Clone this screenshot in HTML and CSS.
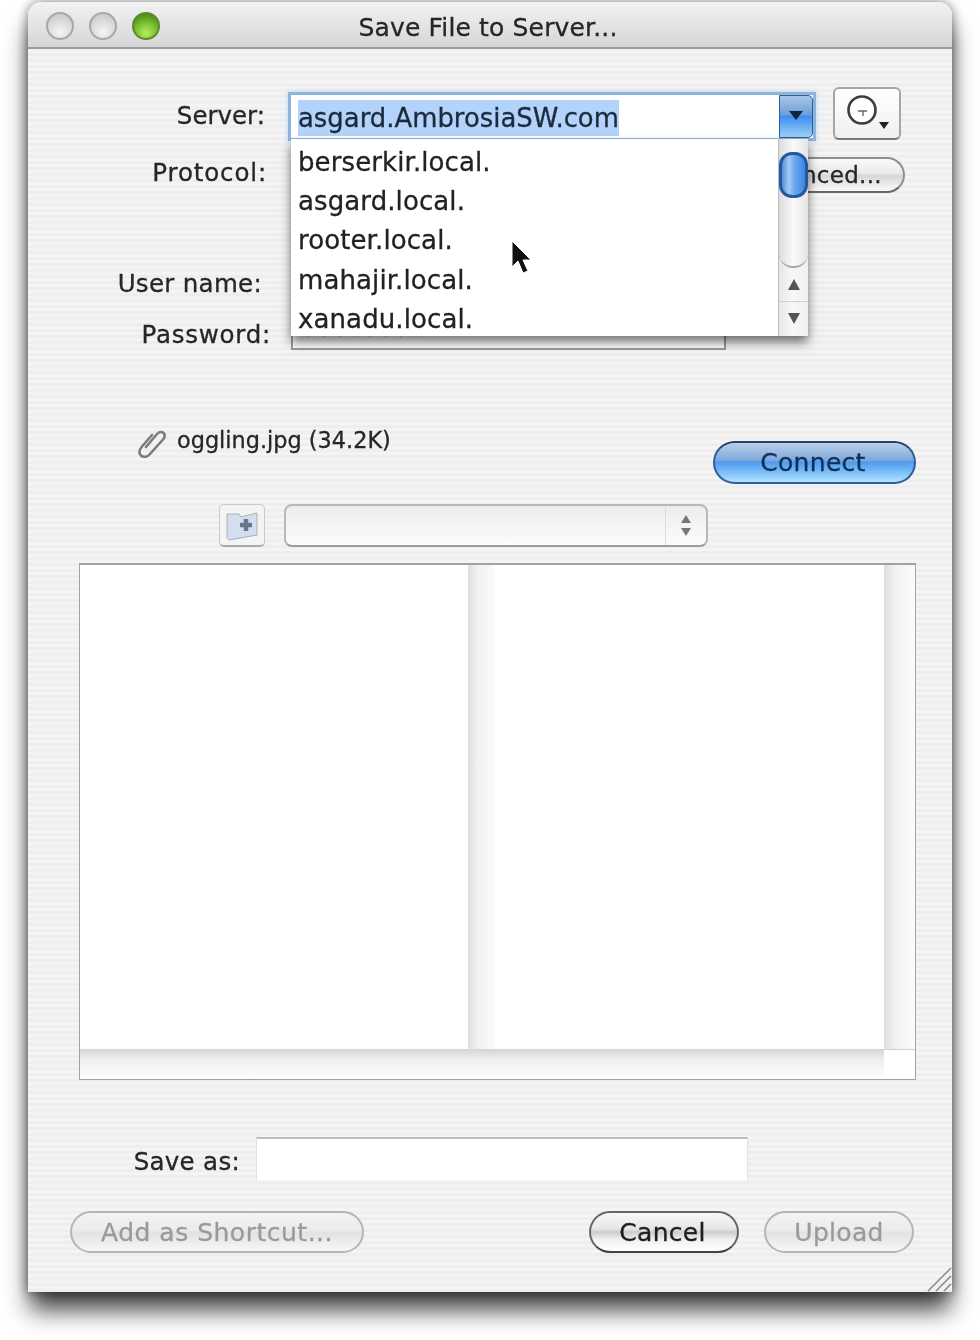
FILE: index.html
```html
<!DOCTYPE html>
<html lang="en">
<head>
    <meta charset="UTF-8">
    <title>Save File to Server...</title>
    <link rel="stylesheet" href="styles.css">
</head>
<body>
    <div class="window">
        <!-- Barre de titre -->
        <div class="titlebar">
            <div class="lights">
                <span class="light"></span>
                <span class="light"></span>
                <span class="light light-green"></span>
            </div>
            <div class="title">Save File to Server...</div>
        </div>

        <div class="content">
            <div class="row row-server">
                <div class="label label-server">Server:</div>
                <div class="combo">
                    <div class="combo-text"><span class="selected">asgard.AmbrosiaSW.com</span></div>
                    <div class="combo-arrow"><span class="tri-down"></span></div>
                </div>
                <div class="history-btn">
                    <svg width="68" height="53" viewBox="0 0 68 53">
                        <circle cx="29" cy="23" r="13.500" fill="#fff" stroke="#3c3c3c" stroke-width="2.600"/>
                        <path d="M25 24h9M30 24v5" fill="none" stroke="#666" stroke-width="1.400"/>
                        <path d="M46 35h10l-5 7z" fill="#222"/>
                    </svg>
                </div>
            </div>

            <div class="row row-protocol">
                <div class="label label-protocol">Protocol:</div>
                <div class="select-hidden"></div>
                <div class="pill pill-advanced">Advanced...</div>
            </div>

            <div class="row row-user">
                <div class="label label-user">User name:</div>
                <div class="field field-user"></div>
            </div>

            <div class="row row-password">
                <div class="label label-password">Password:</div>
                <div class="field field-password">••••••••</div>
            </div>

            <div class="row row-attach">
                <svg class="clip" width="28" height="30" viewBox="0 0 28 30">
                    <path d="M8 19 19 6c2-2.500 5-2.500 6.500-1s1.500 4-.5 6.500L12 26c-3 3.500-7 3.500-9 1.500S1 22 4 18.500L14 7" fill="none" stroke="#7c7c7c" stroke-width="2.600" stroke-linecap="round"/>
                </svg>
                <div class="filename">oggling.jpg (34.2K)</div>
                <div class="pill pill-connect">Connect</div>
            </div>

            <div class="row row-folder">
                <div class="folder-btn">
                    <svg width="34" height="32" viewBox="0 0 34 32">
                        <path d="M2 5h12l2 3 16-4v22L4 31 2 29z" fill="#d3dfee" stroke="#aab0b8"/>
                        <path d="M15 16h12M21 10v12" stroke="#66788e" stroke-width="4.500"/>
                    </svg>
                </div>
                <div class="path-select">
                    <div class="stepper"><span class="tri-up-small"></span><span class="tri-down-small"></span></div>
                </div>
            </div>

            <!-- Navigateur de fichiers -->
            <div class="browser">
                <div class="column"></div>
                <div class="vscroll"></div>
                <div class="column"></div>
                <div class="vscroll"></div>
                <div class="hscroll"></div>
                <div class="corner"></div>
            </div>

            <div class="row row-save">
                <div class="label label-save">Save as:</div>
                <div class="save-field"></div>
            </div>

            <div class="row row-buttons">
                <div class="pill pill-shortcut pill-disabled">Add as Shortcut...</div>
                <div class="button-group">
                    <div class="pill pill-cancel">Cancel</div>
                    <div class="pill pill-upload pill-disabled">Upload</div>
                </div>
            </div>
        </div>

        <!-- Liste ouverte par dessus le formulaire -->
        <div class="dropdown">
            <ul class="dropdown-list">
                <li>berserkir.local.</li>
                <li>asgard.local.</li>
                <li>rooter.local.</li>
                <li>mahajir.local.</li>
                <li>xanadu.local.</li>
            </ul>
            <div class="dropdown-scroll">
                <div class="scroll-track"><div class="scroll-thumb"></div></div>
                <div class="scroll-btn"><span class="tri-up"></span></div>
                <div class="scroll-btn scroll-btn-down"><span class="tri-down-grey"></span></div>
            </div>
        </div>

        <svg class="cursor" width="24" height="36" viewBox="0 0 24 36">
            <path d="M2 1v26l6-6 5 12 5-2-5-11h8z" fill="#111" stroke="#fff" stroke-width="1"/>
        </svg>

        <svg class="grip" width="26" height="26" viewBox="0 0 26 26">
            <path d="M2 25 25 2M10 25 25 10M18 25l7-7" stroke="#8c8c8c" stroke-width="1.600" fill="none"/>
        </svg>
    </div>
</body>
</html>
```
FILE: styles.css
```css
/* Styles de base */
html, body {
    margin: 0;
    padding: 0;
    background: #fff;
}

body {
    width: 980px;
    height: 1340px;
    overflow: hidden;
    padding: 2px 28px 0;
    box-sizing: border-box;
    font-family: "DejaVu Sans", sans-serif;
    font-size: 26px;
    color: #262626;
    -webkit-text-stroke: 0.3px currentColor;
}

.window {
    position: relative;
    width: 924px;
    height: 1290px;
    border-radius: 14px 14px 0 0;
    background: repeating-linear-gradient(180deg, #f4f4f4 0, #f4f4f4 3px, #eeeeee 3px, #eeeeee 6px);
    box-shadow: 0 0 12px rgba(0, 0, 0, 0.5), 0 20px 24px -2px rgba(0, 0, 0, 0.75);
    filter: blur(0.6px);
}

/* Barre de titre */
.titlebar {
    display: flex;
    align-items: center;
    height: 47px;
    padding: 3px 18px 0;
    box-sizing: border-box;
    border-radius: 14px 14px 0 0;
    border-bottom: 2px solid #9c9c9c;
    background: linear-gradient(180deg, #f2f2f2, #d6d6d6);
    position: relative;
}

.lights {
    display: flex;
    gap: 15px;
}

.light {
    width: 28px;
    height: 28px;
    box-sizing: border-box;
    border-radius: 50%;
    border: 2px solid #a8a8a8;
    background: radial-gradient(circle at 50% 75%, #f6f6f6, #cfcfcf 75%);
}

.light-green {
    border-color: #5d8a2a;
    background: radial-gradient(circle at 50% 80%, #b6ee5e, #71b52b 55%, #3e7512);
}

.title {
    position: absolute;
    left: 0;
    right: 0;
    top: 8px;
    padding-right: 4px;
    text-align: center;
    font-size: 25px;
    line-height: 36px;
    letter-spacing: 0.15px;
}

/* Rangées du formulaire */
.row {
    display: flex;
}

.label {
    text-align: right;
    font-size: 24.500px;
    line-height: 30px;
    letter-spacing: 0.3px;
    flex: none;
}

.row-server {
    margin-top: 38px;
    height: 53px;
}

.label-server {
    width: 237px;
    margin-top: 14px;
    letter-spacing: 0;
}

.combo {
    display: flex;
    width: 522px;
    height: 43px;
    margin: 8px 0 0 26px;
    box-sizing: border-box;
    background: #fff;
    box-shadow: 0 0 0 3px #8fb4dc, 0 0 5px 3px #b6d2f0;
}

.combo-text {
    flex: 1;
    padding: 5px 0 0 7px;
    line-height: 36px;
    font-size: 25.900px;
    white-space: nowrap;
    color: #1b2a3c;
}

.selected {
    display: inline-block;
    background: #b3d3fa;
}

.combo-arrow {
    flex: none;
    width: 34px;
    display: flex;
    justify-content: center;
    padding-top: 15px;
    box-sizing: border-box;
    border-radius: 0 5px 5px 0;
    border: 1px solid #33608f;
    background: linear-gradient(180deg, #a9c5e6 0, #6c9fdc 45%, #3e8ef0 50%, #9bd0fb 100%);
}

.tri-down {
    width: 0;
    height: 0;
    border-left: 7px solid transparent;
    border-right: 7px solid transparent;
    border-top: 9px solid #10233c;
}

.history-btn {
    width: 68px;
    height: 53px;
    margin-left: 20px;
    box-sizing: border-box;
    border: 2px solid #a6a6a6;
    border-bottom-color: #777;
    border-radius: 6px;
    background: linear-gradient(180deg, #fff, #f0f0f0);
    flex: none;
}

.history-btn svg {
    display: block;
    margin: -2px;
}

.row-protocol {
    margin-top: 17px;
    height: 36px;
}

.label-protocol {
    width: 239px;
    margin-top: 1px;
    letter-spacing: 0.85px;
}

.select-hidden {
    width: 300px;
    height: 36px;
    margin-left: 24px;
    border-left: 2px solid #8a8a8a;
    box-sizing: border-box;
    flex: none;
}

.pill {
    display: flex;
    align-items: center;
    justify-content: center;
    flex: none;
    box-sizing: border-box;
    border-radius: 22px;
    border: 2px solid #6c6c6c;
    background: linear-gradient(180deg, #fafafa 0, #e9e9e9 45%, #d6d6d6 52%, #fbfbfb 100%);
    font-size: 25px;
    letter-spacing: 0.3px;
}

.pill-advanced {
    width: 185px;
    height: 36px;
    margin-left: 129px;
    font-size: 23px;
    border-color: #8f8f8f;
    border-bottom-color: #666;
}

.row-user {
    margin-top: 72px;
    height: 35px;
}

.label-user {
    width: 234px;
    margin-top: 4px;
}

.field {
    width: 435px;
    height: 35px;
    box-sizing: border-box;
    border: 2px solid #9a9a9a;
    background: #fff;
    flex: none;
}

.field-user {
    margin-left: 29px;
}

.row-password {
    margin-top: 15px;
    height: 35px;
}

.label-password {
    width: 243px;
    margin-top: 5px;
    letter-spacing: 0.75px;
}

.field-password {
    margin-left: 20px;
    padding: 1px 0 0 8px;
    line-height: 30px;
    letter-spacing: 0;
}

.row-attach {
    margin-top: 78px;
    height: 56px;
}

.clip {
    flex: none;
    margin-left: 110px;
}

.filename {
    width: 536px;
    margin: -1px 0 0 11px;
    font-size: 22.400px;
    line-height: 26px;
    flex: none;
}

.pill-connect {
    width: 203px;
    height: 43px;
    margin-top: 13px;
    padding-right: 3px;
    border-color: #2f5f9a;
    border-top-color: #24406e;
    color: #10305a;
    background: linear-gradient(180deg, #b9cfe9 0, #84aadb 42%, #4f9bef 50%, #8fcdfb 85%, #b5e2fd 100%);
}

.row-folder {
    margin-top: 20px;
    height: 43px;
}

.folder-btn {
    width: 46px;
    height: 43px;
    margin-left: 191px;
    flex: none;
    display: flex;
    align-items: center;
    justify-content: center;
    box-sizing: border-box;
    border: 1px solid #c8c8c8;
    border-bottom: 2px solid #aaa;
    border-radius: 5px;
    background: #f4f4f4;
}

.path-select {
    display: flex;
    justify-content: flex-end;
    width: 424px;
    height: 43px;
    margin-left: 19px;
    box-sizing: border-box;
    border: 2px solid #b8b8b8;
    border-bottom-color: #9c9c9c;
    border-radius: 8px;
    background: linear-gradient(180deg, #ededed, #f4f4f4 50%, #fbfbfb);
}

.stepper {
    width: 40px;
    display: flex;
    flex-direction: column;
    align-items: center;
    justify-content: center;
    gap: 5px;
    border-left: 1px solid #dcdcdc;
}

.tri-up-small {
    width: 0;
    height: 0;
    border-left: 5px solid transparent;
    border-right: 5px solid transparent;
    border-bottom: 8px solid #777;
}

.tri-down-small {
    width: 0;
    height: 0;
    border-left: 5px solid transparent;
    border-right: 5px solid transparent;
    border-top: 8px solid #777;
}

/* Navigateur de fichiers */
.browser {
    display: grid;
    grid-template-columns: 388px 27px 389px 31px;
    grid-template-rows: 484px 30px;
    width: 837px;
    height: 517px;
    margin: 16px 0 0 51px;
    box-sizing: border-box;
    border: 1px solid #a2a2a2;
    border-top-width: 2px;
    background: #fff;
}

.column {
    background: #fff;
}

.vscroll {
    background: linear-gradient(90deg, #dedede 0, #f1f1f1 35%, #fbfbfb 100%);
}

.hscroll {
    grid-column: 1 / 4;
    background: linear-gradient(180deg, #d4d4d4 0, #efefef 35%, #fdfdfd 100%);
}

.corner {
    background: #fff;
    border-top: 1px solid #d0d0d0;
}

.row-save {
    margin-top: 57px;
    height: 43px;
}

.label-save {
    width: 212px;
    margin-top: 10px;
}

.save-field {
    width: 492px;
    height: 43px;
    margin-left: 16px;
    box-sizing: border-box;
    border-top: 2px solid #bdbdbd;
    border-left: 1px solid #e2e2e2;
    border-right: 1px solid #e2e2e2;
    background: #fff;
}

.row-buttons {
    margin-top: 31px;
    justify-content: space-between;
    padding: 0 38px 0 42px;
}

.button-group {
    display: flex;
    gap: 25px;
}

.pill-shortcut {
    width: 294px;
    height: 42px;
    letter-spacing: 0.5px;
}

.pill-cancel {
    width: 150px;
    height: 42px;
    padding-right: 3px;
    border-color: #666;
    border-bottom-color: #444;
    color: #1d1d1d;
    background: linear-gradient(180deg, #f8f8f8 0, #e6e6e6 42%, #cdcdcd 50%, #f0f0f0 70%, #fff 100%);
}

.pill-upload {
    width: 150px;
    height: 42px;
}

.pill-disabled {
    border-color: #b5b5b5;
    color: #9a9a9a;
    background: linear-gradient(180deg, #f3f3f3 0, #ececec 45%, #e2e2e2 52%, #f7f7f7 100%);
}

/* Liste déroulante */
.dropdown {
    position: absolute;
    left: 263px;
    top: 137px;
    display: flex;
    width: 517px;
    height: 197px;
    background: #fff;
    box-shadow: 0 6px 10px rgba(0, 0, 0, 0.55);
}

.dropdown-list {
    width: 488px;
    margin: 0;
    padding: 4px 0 0;
    box-sizing: border-box;
    list-style: none;
    border-right: 1px solid #bdbdbd;
    overflow: hidden;
}

.dropdown-list li {
    padding-left: 7px;
    height: 39.200px;
    line-height: 39px;
    font-size: 26px;
    letter-spacing: 0.1px;
    color: #222;
    white-space: nowrap;
}

.dropdown-scroll {
    width: 29px;
    display: flex;
    flex-direction: column;
    background: linear-gradient(90deg, #e6e6e6, #f7f7f7 45%, #f0f0f0);
}

.scroll-track {
    height: 129px;
    padding-top: 13px;
    box-sizing: border-box;
    border-radius: 0 0 14px 14px;
    background: linear-gradient(90deg, #dcdcdc, #fafafa 50%, #e4e4e4);
    border-bottom: 2px solid #a8a8a8;
}

.scroll-thumb {
    height: 46px;
    border-radius: 13px;
    box-sizing: border-box;
    border: 3px solid #24589f;
    background: linear-gradient(90deg, #4f8fe0 0, #a5caf5 30%, #6ca8ef 55%, #3f86e2 100%);
}

.scroll-btn {
    height: 33px;
    display: flex;
    align-items: center;
    justify-content: center;
}

.scroll-btn-down {
    border-top: 1px solid #cfcfcf;
}

.tri-up {
    width: 0;
    height: 0;
    border-left: 6px solid transparent;
    border-right: 6px solid transparent;
    border-bottom: 11px solid #555;
}

.tri-down-grey {
    width: 0;
    height: 0;
    border-left: 6px solid transparent;
    border-right: 6px solid transparent;
    border-top: 11px solid #555;
}

.cursor {
    position: absolute;
    left: 482px;
    top: 238px;
}

.grip {
    position: absolute;
    right: 0;
    bottom: 0;
}
```
